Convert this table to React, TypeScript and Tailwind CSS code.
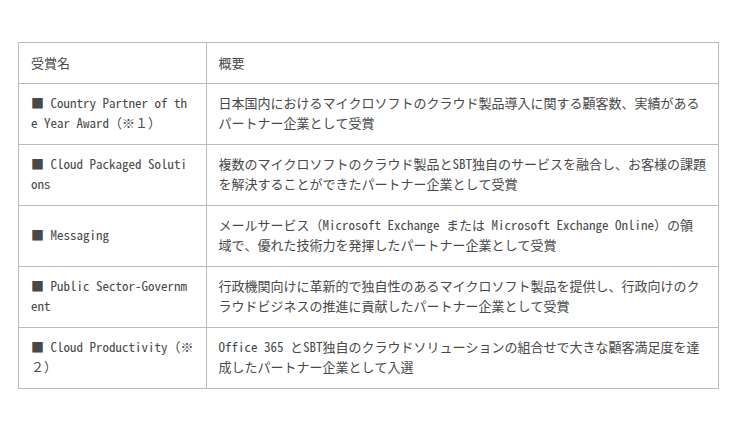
const rows: { name: string[]; desc: string[] }[] = [
  {
    name: ["■ Country Partner of th", "e Year Award（※１）"],
    desc: [
      "日本国内におけるマイクロソフトのクラウド製品導入に関する顧客数、実績がある",
      "パートナー企業として受賞",
    ],
  },
  {
    name: ["■ Cloud Packaged Soluti", "ons"],
    desc: [
      "複数のマイクロソフトのクラウド製品とSBT独自のサービスを融合し、お客様の課題",
      "を解決することができたパートナー企業として受賞",
    ],
  },
  {
    name: ["■ Messaging"],
    desc: [
      "メールサービス（Microsoft Exchange または Microsoft Exchange Online）の領",
      "域で、優れた技術力を発揮したパートナー企業として受賞",
    ],
  },
  {
    name: ["■ Public Sector-Governm", "ent"],
    desc: [
      "行政機関向けに革新的で独自性のあるマイクロソフト製品を提供し、行政向けのク",
      "ラウドビジネスの推進に貢献したパートナー企業として受賞",
    ],
  },
  {
    name: ["■ Cloud Productivity（※", "２）"],
    desc: [
      "Office 365 とSBT独自のクラウドソリューションの組合せで大きな顧客満足度を達",
      "成したパートナー企業として入選",
    ],
  },
];

const Lines = ({ lines }: { lines: string[] }) => (
  <>
    {lines.map((l, i) => (
      <div key={i} className="whitespace-pre">
        {l}
      </div>
    ))}
  </>
);

export default function App() {
  return (
    <div
      className="w-[740px] h-[429px] bg-white pt-[42px] pl-[18px] text-[13px] leading-5 text-[#484848]"
      style={{ fontFamily: '"Noto Sans Mono CJK JP", "Noto Sans CJK JP", monospace' }}
    >
      <table className="w-[700px] border-collapse">
        <thead>
          <tr>
            <th className="w-[188px] border border-[#bbb] px-3 py-[10px] text-left font-normal">
              受賞名
            </th>
            <th className="border border-[#bbb] px-3 py-[10px] text-left font-normal">
              概要
            </th>
          </tr>
        </thead>
        <tbody>
          {rows.map((r, i) => (
            <tr key={i}>
              <td className="border border-[#bbb] px-3 pt-[9px] pb-[11px] align-middle">
                <Lines lines={r.name} />
              </td>
              <td className="border border-[#bbb] px-3 pt-[9px] pb-[11px] align-middle">
                <Lines lines={r.desc} />
              </td>
            </tr>
          ))}
        </tbody>
      </table>
    </div>
  );
}
